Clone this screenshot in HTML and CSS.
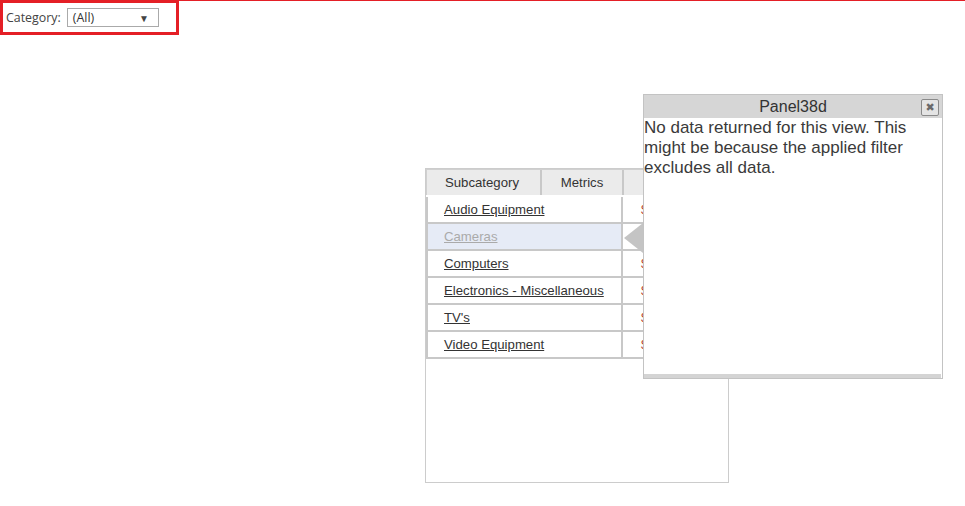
FILE: index.html
```html
<!DOCTYPE html>
<html>
<head>
    <title>Subcategory Report</title>
    <link rel="stylesheet" href="styles.css">
</head>
<body>
    <div class="topbar">
        <!-- Category filter -->
        <div class="filter">
            <span class="filter-label">Category:</span>
            <div class="select">
                <span>(All)</span>
                <span class="caret">&#9660;</span>
            </div>
        </div>
    </div>

    <div class="grid-panel">
        <div class="grid-head">
            <div class="hcell hcell-sub">Subcategory</div>
            <div class="hcell hcell-metrics">Metrics</div>
            <div class="hcell hcell-rest"></div>
        </div>
        <div class="grid-body">
            <div class="row">
                <div class="cell-name"><a href="#">Audio Equipment</a></div>
                <div class="cell-val">$</div>
            </div>
            <div class="row row-active">
                <div class="cell-name"><a href="#">Cameras</a></div>
                <div class="cell-val">$</div>
            </div>
            <div class="row">
                <div class="cell-name"><a href="#">Computers</a></div>
                <div class="cell-val">$</div>
            </div>
            <div class="row">
                <div class="cell-name"><a href="#">Electronics - Miscellaneous</a></div>
                <div class="cell-val">$</div>
            </div>
            <div class="row">
                <div class="cell-name"><a href="#">TV's</a></div>
                <div class="cell-val">$</div>
            </div>
            <div class="row">
                <div class="cell-name"><a href="#">Video Equipment</a></div>
                <div class="cell-val">$</div>
            </div>
        </div>
    </div>

    <!-- Drill popup for the selected row -->
    <div class="popup">
        <div class="popup-head">
            <span class="popup-title">Panel38d</span>
            <span class="popup-close">&#10006;</span>
        </div>
        <div class="popup-body">No data returned for this view. This might be because the applied filter excludes all data.</div>
        <div class="popup-scroll"></div>
    </div>
</body>
</html>
```

FILE: styles.css
```css
body {
    margin: 0;
    position: relative;
    font-family: "Liberation Sans", Arial, sans-serif;
    color: #333;
    background: #fff;
}

/* top filter bar */
.topbar {
    border-top: 1px solid #e41f26;
}

.filter {
    display: flex;
    align-items: center;
    width: 170px;
    height: 29px;
    margin-top: -1px;
    padding-left: 3px;
    border: 3px solid #e41f26;
    font-family: "Open Sans", sans-serif;
    font-size: 12.4px;
    color: #444;
}

.filter-label {
    margin-right: 6px;
}

.select {
    display: flex;
    justify-content: space-between;
    align-items: center;
    width: 76px;
    height: 17px;
    padding: 0 9px 0 5px;
    border: 1px solid #aaa;
    color: #333;
}

.caret {
    font-size: 10px;
    color: #444;
}

/* subcategory grid */
.grid-panel {
    width: 302px;
    height: 313px;
    margin: 133px 0 0 425px;
    border: 1px solid #ccc;
    font-size: 13.2px;
}

.grid-head {
    display: flex;
    height: 25px;
    border-top: 1px solid #d0d0d0;
}

.hcell {
    display: flex;
    align-items: center;
    justify-content: center;
    background: #ebebeb;
    border-right: 2px solid #c8c8c8;
}

.hcell-sub {
    width: 110px;
    padding-right: 3px;
    border-left: 1px solid #d0d0d0;
}

.hcell-metrics {
    width: 80px;
}

.hcell-rest {
    flex: 1;
    border-right: none;
}

.grid-body {
    padding-top: 2px;
}

.row {
    display: flex;
    height: 25px;
    border-bottom: 2px solid #c8c8c8;
    border-left: 2px solid #c8c8c8;
}

.cell-name {
    display: flex;
    align-items: center;
    width: 177px;
    padding-left: 16px;
    border-right: 2px solid #c8c8c8;
}

.cell-name a {
    color: #333;
}

.row-active .cell-name {
    background: #e6ebf6;
}

.row-active .cell-name a {
    color: #aaa;
}

.cell-val {
    display: flex;
    align-items: center;
    padding-left: 18px;
    color: #b8432c;
}

/* popup */
.popup {
    position: absolute;
    left: 643px;
    top: 94px;
    width: 298px;
    height: 283px;
    display: flex;
    flex-direction: column;
    border: 1px solid #c3c3c3;
    background: #fff;
}

/* callout arrow pointing at the selected row */
.popup::before {
    content: "";
    position: absolute;
    left: -20px;
    top: 128px;
    border-right: 19px solid #c4c4c4;
    border-top: 15px solid transparent;
    border-bottom: 15px solid transparent;
}

.popup-head {
    position: relative;
    height: 23px;
    display: flex;
    align-items: center;
    justify-content: center;
    background: #d6d6d6;
    font-size: 16px;
}

.popup-close {
    position: absolute;
    right: 3px;
    top: 4px;
    width: 16px;
    height: 15px;
    display: flex;
    align-items: center;
    justify-content: center;
    border: 1px solid #8a8a8a;
    border-radius: 2px;
    background: #e4e4e4;
    color: #6a6a6a;
    font-size: 11px;
    font-family: "DejaVu Sans", sans-serif;
}

.popup-body {
    flex: 1;
    font-size: 17px;
    line-height: 20px;
    color: #3a3a3a;
}

.popup-scroll {
    height: 4px;
    margin-right: 1px;
    background: #d4d4d4;
}
```
